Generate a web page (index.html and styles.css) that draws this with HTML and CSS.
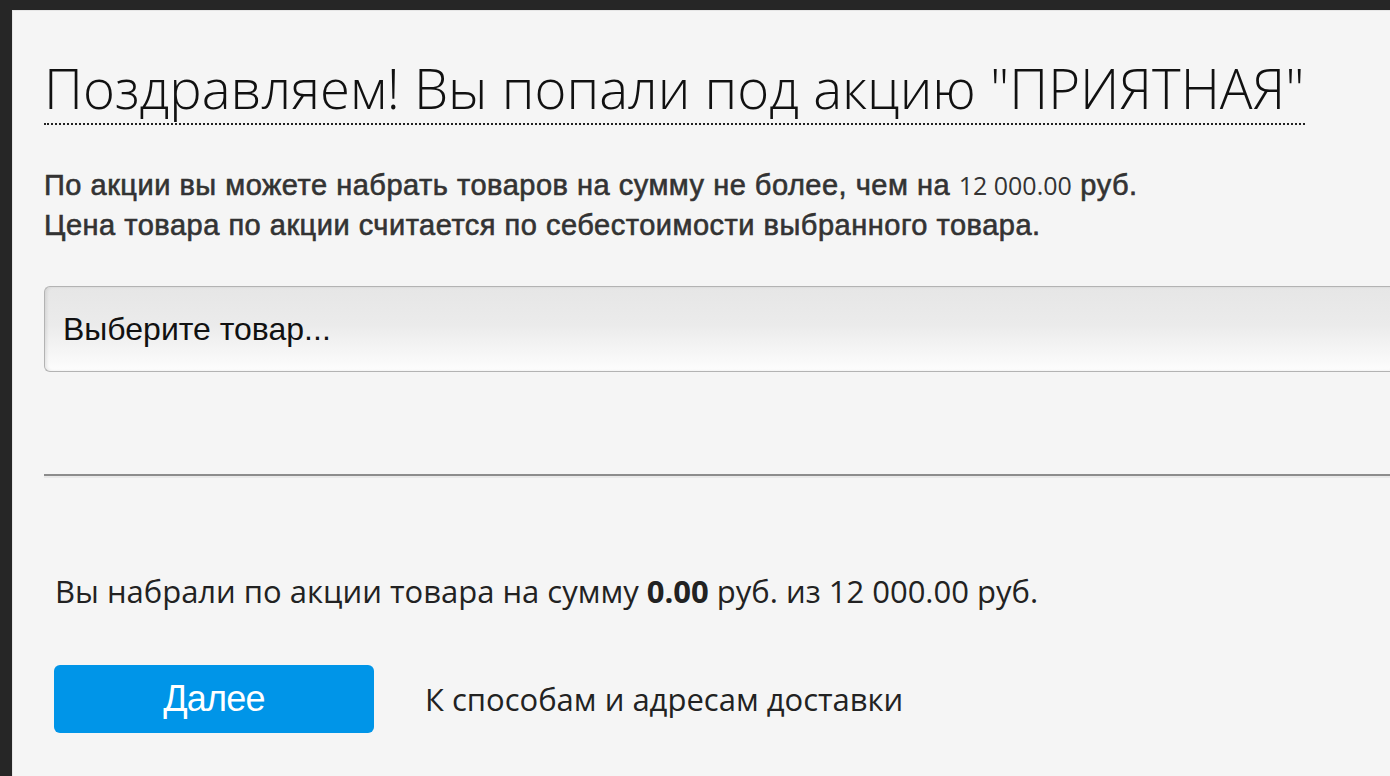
FILE: index.html
```html
<!DOCTYPE html>
<html lang="ru">
<head>
<meta charset="utf-8">
<link rel="stylesheet" href="styles.css">
</head>
<body>
<div class="panel">
  <h1 class="title">Поздравляем! Вы попали под акцию "ПРИЯТНАЯ"</h1>
  <p class="info">По акции вы можете набрать товаров на сумму не более, чем на <span class="num">12 000.00</span> руб.<br>Цена товара по акции считается по себестоимости выбранного товара.</p>
  <div class="select">Выберите товар...</div>
  <div class="divider"></div>
  <p class="sum">Вы набрали по акции товара на сумму <b>0.00</b> руб. из 12 000.00 руб.</p>
  <div class="actions">
    <button class="btn">Далее</button>
    <a class="link">К способам и адресам доставки</a>
  </div>
</div>
</body>
</html>
```
FILE: styles.css
```css
html, body {
  margin: 0;
  padding: 0;
  background: #262626;
  height: 100%;
  overflow: hidden;
}
.panel {
  margin: 10px 0 0 12px;
  border-top: 1px solid #e6e6e6;
  border-left: 1px solid #e6e6e6;
  background: #f5f5f5;
  height: 800px;
  padding: 42px 0 0 31px;
  font-family: "Open Sans", sans-serif;
  color: #1e1e1e;
  box-sizing: border-box;
}
.title {
  margin: 0;
  width: fit-content;
  font-weight: 300;
  font-size: 54.5px;
  line-height: 70px;
  color: #111;
  border-bottom: 2px dotted #222;
}
.info {
  margin: 40px 0 0 0;
  font-family: "Liberation Sans", Arial, sans-serif;
  font-weight: 400;
  font-size: 29px;
  line-height: 40px;
  letter-spacing: 0.5px;
  color: #333;
  -webkit-text-stroke: 0.6px #333;
}
.info .num {
  font-family: "Open Sans", sans-serif;
  font-weight: 400;
  -webkit-text-stroke: 0;
  letter-spacing: 0;
  font-size: 25px;
}
.select {
  margin-top: 41px;
  height: 84px;
  border: 1px solid #b3b3b3;
  border-right: none;
  border-radius: 6px 0 0 6px;
  background: linear-gradient(#e6e6e6 0%, #ebebeb 45%, #fdfdfd 100%);
  box-shadow: inset 2px 0 3px rgba(0,0,0,0.08);
  display: flex;
  align-items: center;
  padding-left: 18px;
  font-family: "Liberation Sans", Arial, sans-serif;
  font-size: 32px;
  color: #111;
}
.divider {
  margin-top: 102px;
  height: 2px;
  background: #8c8c8c;
  border-bottom: 2px solid #e9e9e9;
}
.sum {
  margin: 93px 0 0 11px;
  font-size: 31px;
  line-height: 40px;
  font-weight: 400;
  color: #222;
}
.sum b {
  font-weight: 700;
}
.actions {
  margin: 54px 0 0 10px;
  display: flex;
  align-items: center;
  gap: 51px;
}
.btn {
  width: 320px;
  height: 68px;
  border: none;
  border-radius: 6px;
  background: #0095e8;
  color: #fff;
  font-family: "Liberation Sans", Arial, sans-serif;
  font-size: 36px;
  letter-spacing: -0.8px;
  padding: 0;
}
.link {
  font-size: 31px;
  color: #222;
}
```
